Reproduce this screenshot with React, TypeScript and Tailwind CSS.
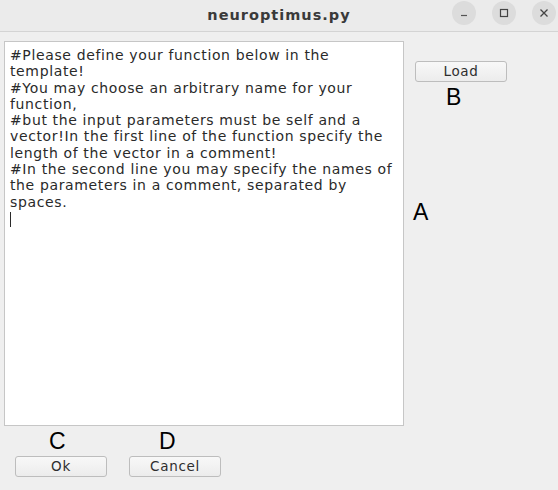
import React from 'react';

const text = `#Please define your function below in the template!
#You may choose an arbitrary name for your function,
#but the input parameters must be self and a vector!In the first line of the function specify the length of the vector in a comment!
#In the second line you may specify the names of the parameters in a comment, separated by spaces.
`;

const ui = '"DejaVu Sans", "Noto Sans", sans-serif';
const letter = '"Liberation Sans", Arial, sans-serif';

function Btn({ label, className }: { label: string; className: string }) {
  return (
    <button
      type="button"
      className={`h-[21px] rounded-[3px] border border-[#bdbdbd] bg-gradient-to-b from-[#f8f8f8] to-[#ececec] text-[13.5px] leading-none tracking-[0.7px] text-[#2e2e2e] ${className}`}
      style={{ fontFamily: ui }}
    >
      {label}
    </button>
  );
}

function Letter({ ch, className }: { ch: string; className: string }) {
  return (
    <span className={`text-[23px] leading-[24px] text-black ${className}`} style={{ fontFamily: letter }}>
      {ch}
    </span>
  );
}

export default function App() {
  return (
    <div className="flex h-[490px] w-[558px] flex-col bg-[#efefef]" style={{ fontFamily: ui }}>
      <div className="relative flex h-[32px] shrink-0 items-center justify-center border-b border-[#d4d4d4] bg-[#ebebeb]">
        <span className="text-[14.5px] font-bold tracking-[1px] text-[#3a3a3a]">neuroptimus.py</span>
        <div className="absolute right-[2px] top-[1px] flex gap-[16px]">
          <span className="flex h-[24px] w-[24px] items-center justify-center rounded-full bg-[#dcdcdc]">
            <svg width="10" height="10" viewBox="0 0 10 10">
              <path d="M2 7.5h6" stroke="#555" strokeWidth="1.2" />
            </svg>
          </span>
          <span className="flex h-[24px] w-[24px] items-center justify-center rounded-full bg-[#dcdcdc]">
            <svg width="10" height="10" viewBox="0 0 10 10">
              <rect x="1.5" y="1.5" width="7" height="7" fill="none" stroke="#444" strokeWidth="1.2" />
            </svg>
          </span>
          <span className="flex h-[24px] w-[24px] items-center justify-center rounded-full bg-[#dcdcdc]">
            <svg width="10" height="10" viewBox="0 0 10 10">
              <path d="M1.5 1.5l7 7M8.5 1.5l-7 7" stroke="#444" strokeWidth="1.3" />
            </svg>
          </span>
        </div>
      </div>

      <div className="flex pt-[9px]">
        <div className="ml-[4px] h-[385px] w-[400px] border border-[#c6c6c6] bg-white pl-[5px] pr-[4px] pt-[5px]">
          <p className="whitespace-pre-wrap text-[14px] leading-[16.3px] tracking-[0.63px] text-[#2a2a2a]">
            {text}
            <span className="inline-block h-[15px] w-px translate-y-[2px] bg-[#2a2a2a]" />
          </p>
        </div>
        <div className="flex flex-col">
          <Btn label="Load" className="ml-[11px] mt-[20px] w-[92px]" />
          <Letter ch="B" className="ml-[42px] mt-[3px]" />
          <Letter ch="A" className="ml-[9px] mt-[91px]" />
        </div>
      </div>

      <div className="flex pl-[15px] pt-[3px]">
        <div className="flex flex-col">
          <Letter ch="C" className="ml-[34px]" />
          <Btn label="Ok" className="mt-[3px] w-[92px]" />
        </div>
        <div className="ml-[22px] flex flex-col">
          <Letter ch="D" className="ml-[30px]" />
          <Btn label="Cancel" className="mt-[3px] w-[92px]" />
        </div>
      </div>
    </div>
  );
}
